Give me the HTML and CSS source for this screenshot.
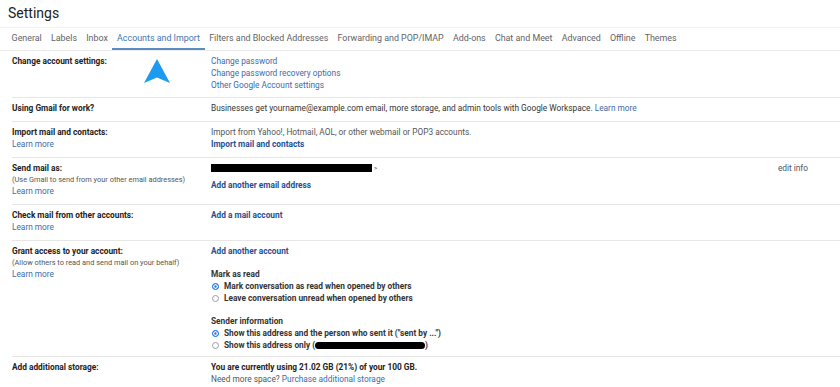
FILE: index.html
```html
<!DOCTYPE html>
<html lang="en">
<head>
  <meta charset="UTF-8">
  <meta name="viewport" content="width=device-width, initial-scale=1.0">
  <title>Settings - Accounts and Import</title>
  <link rel="stylesheet" href="styles.css">
</head>
<body>

  <div class="page">
    <h1 class="title">Settings</h1>

    <!-- tabs -->
    <div class="tabs">
      <span class="tab">General</span>
      <span class="tab">Labels</span>
      <span class="tab">Inbox</span>
      <span class="tab active">Accounts and Import</span>
      <span class="tab">Filters and Blocked Addresses</span>
      <span class="tab">Forwarding and POP/IMAP</span>
      <span class="tab">Add-ons</span>
      <span class="tab">Chat and Meet</span>
      <span class="tab">Advanced</span>
      <span class="tab">Offline</span>
      <span class="tab">Themes</span>
    </div>

    <div class="rows">
      <div class="row first">
        <div class="label"><b>Change account settings:</b></div>
        <div class="content">
          <a class="link">Change password</a>
          <a class="link">Change password recovery options</a>
          <a class="link">Other Google Account settings</a>
        </div>
        <svg class="arrow" width="28" height="25" viewBox="0 0 28 25">
          <path d="M14 0 L27 24 L14 18.5 L1 24 Z" fill="#1c9bef"/>
        </svg>
      </div>

      <div class="row">
        <div class="label"><b>Using Gmail for work?</b></div>
        <div class="content">
          <span class="text">Businesses get yourname@example.com email, more storage, and admin tools with Google Workspace. <a class="link inline">Learn more</a></span>
        </div>
      </div>

      <div class="row">
        <div class="label">
          <b>Import mail and contacts:</b>
          <a class="link">Learn more</a>
        </div>
        <div class="content">
          <span class="text muted">Import from Yahoo!, Hotmail, AOL, or other webmail or POP3 accounts.</span>
          <a class="link strong">Import mail and contacts</a>
        </div>
      </div>

      <div class="row">
        <div class="label">
          <b>Send mail as:</b>
          <span class="note">(Use Gmail to send from your other email addresses)</span>
          <a class="link">Learn more</a>
        </div>
        <div class="content">
          <div class="sendas">
            <span class="redact wide"></span><span class="gt">&gt;</span>
            <a class="edit">edit info</a>
          </div>
          <a class="link strong spaced">Add another email address</a>
        </div>
      </div>

      <div class="row">
        <div class="label">
          <b>Check mail from other accounts:</b>
          <a class="link">Learn more</a>
        </div>
        <div class="content">
          <a class="link strong">Add a mail account</a>
        </div>
      </div>

      <div class="row grant">
        <div class="label">
          <b>Grant access to your account:</b>
          <span class="note">(Allow others to read and send mail on your behalf)</span>
          <a class="link">Learn more</a>
        </div>
        <div class="content">
          <a class="link strong">Add another account</a>

          <div class="group">
            <div class="group-title">Mark as read</div>
            <label class="radio"><span class="dot on"></span>Mark conversation as read when opened by others</label>
            <label class="radio"><span class="dot"></span>Leave conversation unread when opened by others</label>
          </div>

          <div class="group">
            <div class="group-title">Sender information</div>
            <label class="radio"><span class="dot on"></span>Show this address and the person who sent it ("sent by ...")</label>
            <label class="radio"><span class="dot"></span>Show this address only (<span class="redact pill"></span>)</label>
          </div>
        </div>
      </div>

      <div class="row last">
        <div class="label"><b>Add additional storage:</b></div>
        <div class="content">
          <span class="text bold">You are currently using 21.02 GB (21%) of your 100 GB.</span>
          <span class="text muted">Need more space? <a class="link inline">Purchase additional storage</a></span>
        </div>
      </div>
    </div>
  </div>

</body>
</html>
```

FILE: styles.css
```css
body {
  margin: 0;
  background-color: #fff;
  font-family: Roboto, "Liberation Sans", Arial, sans-serif;
  color: #222;
}
.page {
  position: relative;
}
.title {
  margin: 0;
  padding: 5px 0 0 8px;
  height: 22px;
  font-size: 14px;
  font-weight: 400;
  line-height: 17px;
  color: #202124;
}
.tabs {
  display: flex;
  padding: 0 7px;
  height: 22px;
  border-top: 1px solid #f1f1f1;
  border-bottom: 1px solid #ececec;
}
.tab {
  padding: 0 4.6px;
  font-size: 8.9px;
  line-height: 20px;
  color: #5f6368;
  border-bottom: 2px solid transparent;
}
.tab.active {
  color: #3c77b6;
  border-bottom-color: #5a8cc4;
}
.rows {
  padding-left: 12px;
}
.row {
  position: relative;
  display: grid;
  grid-template-columns: 199px 1fr;
  padding: 4px 0 7px;
  border-bottom: 1px solid #e6e6e6;
  font-size: 8.3px;
  line-height: 12px;
}
.row.first {
  padding-bottom: 6px;
}
.row.last {
  border-bottom: none;
}
.label, .content {
  display: flex;
  flex-direction: column;
  align-items: flex-start;
}
.label b {
  font-weight: 700;
  color: #222;
}
.note {
  font-size: 7.4px;
  line-height: 11px;
  color: #555;
}
.link {
  color: #3e6aa8;
  cursor: pointer;
}
.link.strong {
  font-weight: 700;
  color: #1f4f93;
}
.link.spaced {
  margin-top: 5px;
}
.text {
  color: #333;
}
.text.muted {
  color: #555;
}
.text.bold {
  font-weight: 700;
  color: #222;
}
.sendas {
  display: flex;
  align-items: center;
  width: 100%;
  box-sizing: border-box;
  padding-right: 32px;
}
.redact {
  display: inline-block;
  background-color: #000;
}
.redact.wide {
  width: 161px;
  height: 8px;
}
.gt {
  font-size: 6px;
  margin-left: 2px;
  color: #333;
}
.edit {
  margin-left: auto;
  color: #4a5668;
  cursor: pointer;
}
.group {
  margin-top: 11px;
  display: flex;
  flex-direction: column;
}
.group-title {
  font-weight: 700;
  color: #333;
  line-height: 12px;
}
.radio {
  display: flex;
  align-items: center;
  height: 12px;
  font-weight: 700;
  color: #333;
}
.dot {
  width: 5px;
  height: 5px;
  margin: 0 5px 0 1px;
  border: 1px solid #9aa0a6;
  border-radius: 50%;
  box-sizing: content-box;
}
.dot.on {
  border-color: #1a73e8;
  background-color: #1a73e8;
  box-shadow: inset 0 0 0 1.3px #fff;
}
.redact.pill {
  width: 110px;
  height: 7px;
  border-radius: 4px;
}
.row.grant {
  padding-bottom: 5px;
}
.arrow {
  position: absolute;
  left: 131px;
  top: 8px;
}
```
